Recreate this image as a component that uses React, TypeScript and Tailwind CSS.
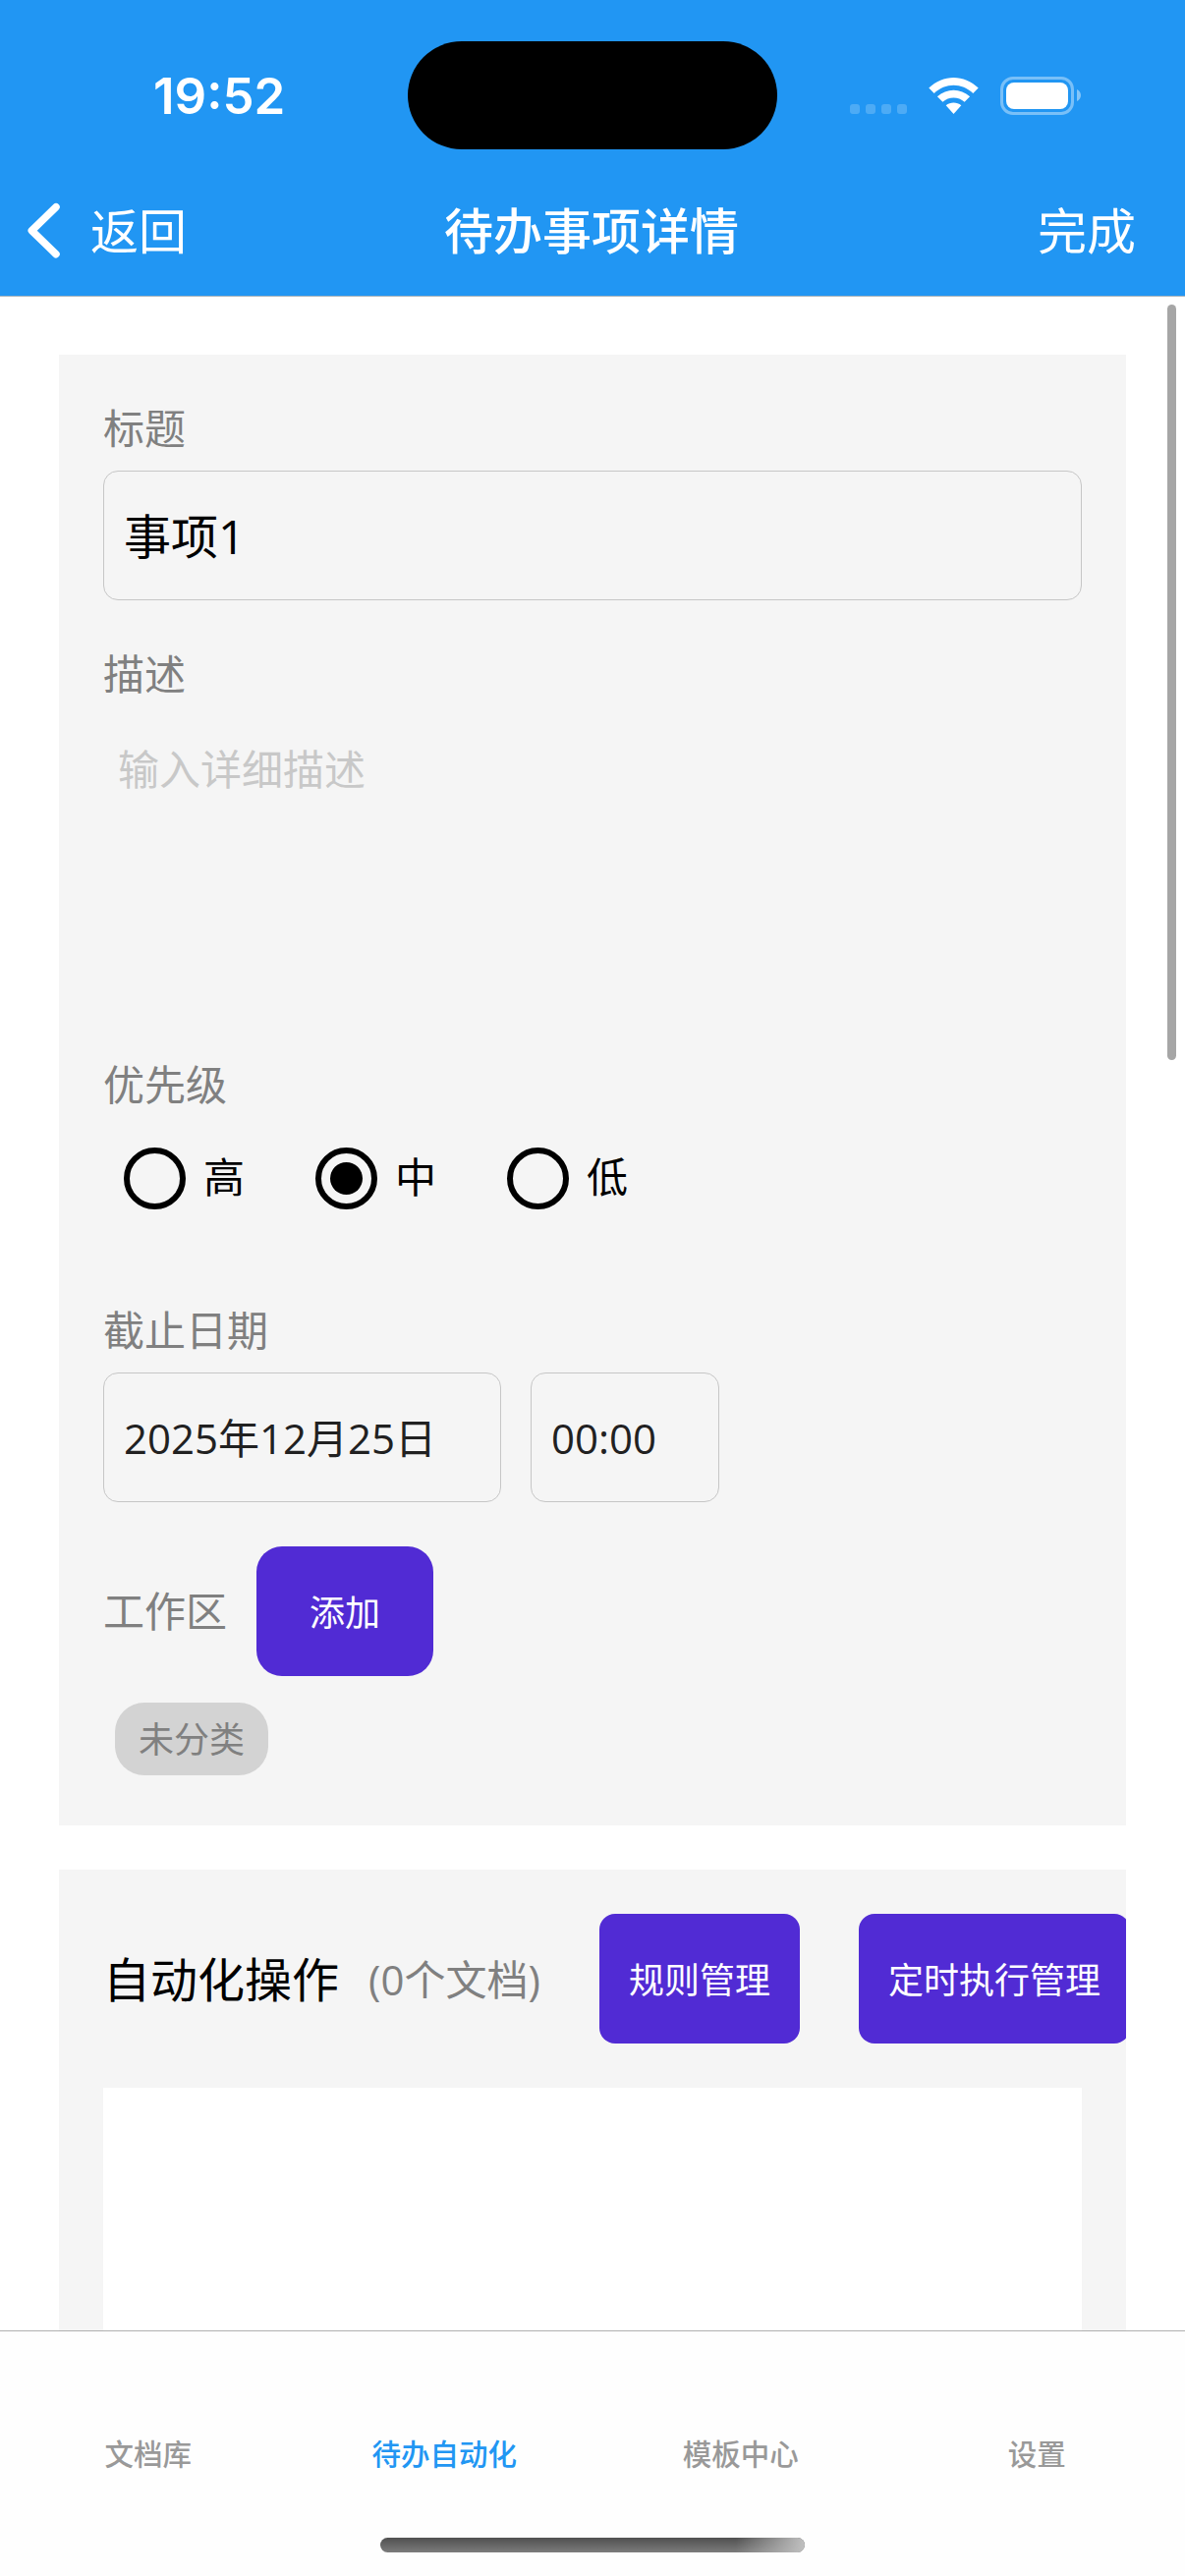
interface LabelProps {
  text: string;
}

interface RadioProps {
  text: string;
  checked?: boolean;
}

interface TabProps {
  text: string;
  active?: boolean;
}

const FieldLabel: React.FC<LabelProps> = ({ text }) => (
  <p className="pb-[1px] text-[42px] leading-[60px] text-[#808080]">{text}</p>
);

const Radio: React.FC<RadioProps> = ({ text, checked }) => (
  <div className="flex w-[195px] items-center">
    <div className="flex size-[63px] items-center justify-center rounded-full border-[6px] border-black">
      {checked && <div className="size-[33px] rounded-full bg-black" />}
    </div>
    <p className="ml-[18px] pb-[3px] text-[42px] leading-[58px] text-black">{text}</p>
  </div>
);

const Tab: React.FC<TabProps> = ({ text, active }) => (
  <div
    className={`flex-1 text-center text-[29.5px] font-medium leading-[44px] ${
      active ? "text-[#2196f3]" : "text-[#999999]"
    }`}
  >
    {text}
  </div>
);

const StatusBar = () => (
  <div className="flex h-[194px] items-start justify-between">
    <p className="w-[415px] pl-[156px] pt-[67px] font-[Inter] text-[51px] font-semibold leading-[62px]">
      19:52
    </p>
    <div className="mt-[42px] h-[110px] w-[376px] rounded-[55px] bg-black" />
    <svg className="h-[194px] w-[415px]" viewBox="791 0 415 194" fill="none">
      <g fill="#fff" fillOpacity="0.2">
        <rect x="865" y="106" width="10" height="10" rx="3" />
        <rect x="881" y="106" width="10" height="10" rx="3" />
        <rect x="897" y="106" width="10" height="10" rx="3" />
        <rect x="913" y="106" width="10" height="10" rx="3" />
      </g>
      <g fill="#fff">
        <path d="M945.3 89.6C959.5 75.4 981.5 75.4 995.7 89.6L990.3 95C979 84 962 84 950.7 95Z" />
        <path d="M953.9 98.2C963.5 89.5 977.5 89.5 987.1 98.2L981.6 103.8C975.3 98 965.7 98 959.4 103.8Z" />
        <path d="M962.7 107.2C967 103.5 974 103.5 978.3 107.2L970.5 116Z" />
      </g>
      <rect x="1019.5" y="79.5" width="72" height="36" rx="11.5" stroke="#fff" strokeOpacity="0.4" strokeWidth="3" />
      <rect x="1024" y="84" width="63" height="27" rx="8" fill="#fff" />
      <path d="M1096 91C1098.500 92 1100 94.500 1100 97S1098.500 102 1096 103Z" fill="#fff" fillOpacity="0.45" />
    </svg>
  </div>
);

const NavBar = () => (
  <div className="grid h-[107px] grid-cols-3 pb-[25px] text-[50px] leading-[82px]">
    <div className="flex items-center pl-[27px]">
      <svg className="h-[66px] w-[36px]" viewBox="0 0 36 66" fill="none">
        <path
          d="M30 8.700L5.300 32.700L30 56.700"
          stroke="#fff"
          strokeWidth="7.500"
          strokeLinecap="round"
          strokeLinejoin="round"
        />
      </svg>
      <p className="ml-[29px] text-[49px]">返回</p>
    </div>
    <p className="pr-[2px] text-center font-medium">待办事项详情</p>
    <p className="pr-[50px] text-right">完成</p>
  </div>
);

const DetailCard = () => (
  <div className="h-[1497px] bg-[#f5f5f5] px-[45px] pt-[45px]">
    <FieldLabel text="标题" />
    <div className="mt-3 flex h-[132px] items-center rounded-[15px] border border-[#c6c6c6] pl-5 pt-[2px] text-[48px] text-black">
      事项1
    </div>

    <div className="mt-[45px]">
      <FieldLabel text="描述" />
      <div className="mt-3 h-[300px] px-[15px] pt-6 text-[42px] leading-[60px] text-[#c8c8c8]">
        输入详细描述
      </div>
    </div>

    <div className="mt-[45px]">
      <FieldLabel text="优先级" />
      <div className="mt-3 h-[132px] pl-[21px]">
        <div className="flex h-[105px] items-center">
          <Radio text="高" />
          <Radio text="中" checked />
          <Radio text="低" />
        </div>
      </div>
    </div>

    <div className="mt-[45px]">
      <FieldLabel text="截止日期" />
      <div className="mt-3 flex gap-[30px] text-[42px] text-[#212121]">
        <div className="flex h-[132px] w-[405px] items-center rounded-[15px] border border-[#c6c6c6] pl-5">
          2025年12月25日
        </div>
        <div className="flex h-[132px] w-[192px] items-center rounded-[15px] border border-[#c6c6c6] pl-5">
          00:00
        </div>
      </div>
    </div>

    <div className="mt-[45px] flex items-center gap-[30px]">
      <FieldLabel text="工作区" />
      <div className="flex h-[132px] w-[180px] items-center justify-center rounded-[26px] bg-[#512bd4] pt-[3px] text-[36px] text-white">
        添加
      </div>
    </div>
    <div className="ml-3 mt-[27px] flex h-[74px] w-[156px] items-center justify-center rounded-[30px] bg-[#d3d3d3] pt-[2px] text-[36px] text-[#808080]">
      未分类
    </div>
  </div>
);

const AutomationCard = () => (
  <div className="mt-[45px] h-[600px] overflow-hidden bg-[#f5f5f5] p-[45px]">
    <div className="flex w-[1100px] items-center">
      <p className="pt-[2px] text-[48px] text-black">自动化操作</p>
      <p className="ml-[30px] w-[235px] text-[42px] text-[#808080]">(0个文档)</p>
      <div className="flex h-[132px] w-[204px] items-center justify-center rounded-[16px] bg-[#512bd4] pt-[3px] text-[36px] text-white">
        规则管理
      </div>
      <div className="ml-[60px] flex h-[132px] w-[276px] items-center justify-center rounded-[16px] bg-[#512bd4] pt-[3px] text-[36px] text-white">
        定时执行管理
      </div>
    </div>
    <div className="mt-[45px] h-[500px] bg-white" />
  </div>
);

const App = () => {
  return (
    <div className="flex h-[2622px] w-[1206px] flex-col overflow-hidden bg-white font-['Open_Sans','Noto_Sans_CJK_SC',sans-serif]">
      <header className="h-[302px] shrink-0 border-b border-[#a6b3bd] bg-[#2196f3] text-white">
        <StatusBar />
        <NavBar />
      </header>

      <main className="relative h-[2070px] shrink-0 overflow-hidden px-[60px] pt-[59px]">
        <DetailCard />
        <AutomationCard />
        {/* scroll indicator */}
        <div className="absolute right-[9px] top-2 h-[769px] w-[9px] rounded-full bg-[#a6a6a6]" />
      </main>

      <footer className="flex h-[250px] shrink-0 flex-col items-center border-t border-[#b0b0b0] bg-[#fefefe]">
        <div className="flex w-full pt-[103px]">
          <Tab text="文档库" />
          <Tab text="待办自动化" active />
          <Tab text="模板中心" />
          <Tab text="设置" />
        </div>
        <div className="mt-[63px] h-[15px] w-[432px] overflow-hidden rounded-full bg-linear-to-b from-[#505050] to-[#7c7c7c]">
          <div className="ml-auto h-full w-[70px] bg-linear-to-r from-transparent to-[#c0c0c0]" />
        </div>
      </footer>
    </div>
  );
};

export default App;
